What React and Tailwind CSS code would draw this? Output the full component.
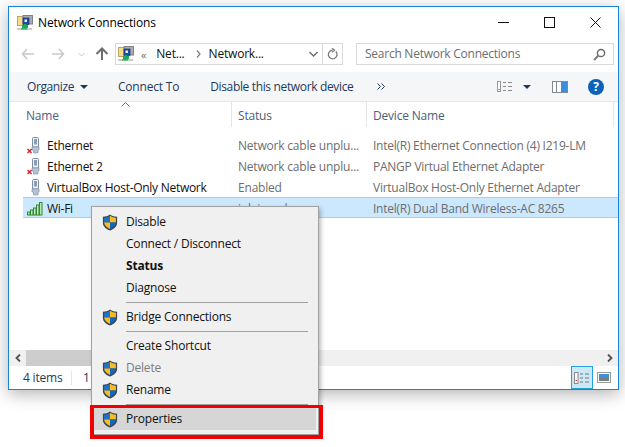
import React from "react";

const font = { fontFamily: '"Open Sans", "Noto Sans", sans-serif' };

function Shield({ className = "" }) {
  return (
    <svg width="16" height="17" viewBox="0 0 16 17" className={className}>
      <path d="M8 .4C6 1.900 3.500 2.600.9 2.700v6.300c0 3.600 3.200 6.100 7.100 7.600 3.900-1.500 7.100-4 7.100-7.600V2.700C12.500 2.600 10 1.900 8 .4z" fill="#3a4654" />
      <path d="M8 1.800C6.300 3 4.300 3.600 2.100 3.800v4.800H8z" fill="#1f74c9" />
      <path d="M8 1.800v6.800h5.900V3.800C11.700 3.600 9.700 3 8 1.800z" fill="#f6bd27" />
      <path d="M2.100 8.600c.2 2.900 2.800 5 5.900 6.400V8.600z" fill="#f6bd27" />
      <path d="M8 8.600V15c3.100-1.400 5.700-3.500 5.900-6.400z" fill="#1567bd" />
    </svg>
  );
}

function NetIcon() {
  return (
    <svg width="16" height="16" viewBox="0 0 16 16" className="shrink-0">
      <rect x="0.500" y="1.500" width="8" height="9" fill="#f3dc8c" stroke="#b9a565" />
      <rect x="6" y="0.500" width="9.500" height="8.500" fill="#a9adb3" stroke="#7c8087" />
      <rect x="6" y="3" width="6" height="6.500" fill="#1c4fa8" stroke="#1a2f66" strokeWidth="0.700" />
      <rect x="7.500" y="4.500" width="2.500" height="2.500" fill="#e8f0ff" />
      <rect x="5" y="10" width="6" height="3" fill="#1fa95a" />
      <rect x="7" y="9" width="2" height="2" fill="#1fa95a" />
      <rect x="0" y="13" width="15" height="2" fill="#c9c9c9" />
      <rect x="4" y="13" width="6" height="1.500" fill="#26b765" />
    </svg>
  );
}

function Plug({ x }) {
  return (
    <svg width="16" height="17" viewBox="0 0 16 17" className="shrink-0">
      <path d="M5.500 1.500q0-1 1-1h4q1 0 1 1v8.500h-6z" fill="#eef2f6" stroke="#7d8ca0" />
      <rect x="7" y="2" width="3" height="5.500" fill="#8b9db5" />
      <path d="M5 10h7v3H11v3H6.500v-3H5z" fill="#b4c3d6" stroke="#8796ab" strokeWidth="0.700" />
      {x && <path d="M0.500 12l4 4m0-4l-4 4" stroke="#d5232a" strokeWidth="1.500" />}
    </svg>
  );
}

function Bars() {
  return (
    <svg width="17" height="14" viewBox="0 0 17 14" className="shrink-0">
      {[
        [0.500, 10, 3],
        [3.500, 8, 5],
        [6.500, 6, 7],
        [9.500, 3, 10],
        [12.500, 0.500, 12.500],
      ].map(([x, y, h]) => (
        <rect key={x} x={x} y={y} width="2.500" height={h} fill="#bfe7b4" stroke="#2f8a35" strokeWidth="1" />
      ))}
    </svg>
  );
}

function Row({ icon, name, status, device, selected }) {
  return (
    <div
      className={
        "flex h-[21px] items-center border-y pt-[2px] " +
        (selected ? "border-[#99d1ff] bg-[#cce8ff]" : "border-transparent")
      }
    >
      <div className="flex w-[208px] shrink-0 items-center gap-[4px] pl-[4px] tracking-[-0.28px] text-[#111]">
        <span className="flex w-[16px] shrink-0 justify-center">{icon}</span>
        <span>{name}</span>
      </div>
      <div className="w-[135px] shrink-0 pl-[7px] text-[#6d6d6d]">{status}</div>
      <div className="pl-[7px] tracking-[-0.25px] text-[#6d6d6d]">{device}</div>
    </div>
  );
}

function MenuItem({ label, shield, bold, disabled, active }) {
  return (
    <div
      className={
        "flex h-[22px] items-center " +
        (active ? "bg-[#d6d6d6] " : "") +
        (disabled ? "text-[#7d7d7d] " : "text-[#111] ") +
        (bold ? "font-bold" : "")
      }
    >
      <span className="flex w-[32px] shrink-0 justify-end pr-[8px]">{shield && <Shield />}</span>
      <span>{label}</span>
    </div>
  );
}

function Sep() {
  return (
    <div className="flex h-[7px] items-center pl-[32px] pr-[8px]">
      <div className="h-px w-full bg-[#a0a0a0]" />
    </div>
  );
}

export default function App() {
  return (
    <div style={font} className="relative h-[447px] w-[625px] overflow-hidden bg-white pl-[8px] pt-[6px] text-[12px] leading-none tracking-[-0.2px]">
      <div className="flex h-[384px] w-[611px] flex-col border border-[#1883d7] bg-white shadow-[0_4px_16px_rgba(0,0,0,0.3)]">
        {/* Title bar */}
        <div className="flex h-[31px] shrink-0 items-center pl-[8px]">
          <NetIcon />
          <span className="ml-[5px] pt-[1px] text-[12px] tracking-[-0.14px] text-black">Network Connections</span>
          <div className="ml-auto flex items-center text-black">
            <span className="flex w-[46px] justify-center">
              <svg width="11" height="11" viewBox="0 0 11 11"><path d="M0 5.500h11" stroke="#111" /></svg>
            </span>
            <span className="flex w-[46px] justify-center">
              <svg width="11" height="11" viewBox="0 0 11 11"><rect x=".5" y=".5" width="10" height="10" fill="none" stroke="#111" /></svg>
            </span>
            <span className="flex w-[46px] justify-center">
              <svg width="11" height="11" viewBox="0 0 11 11"><path d="M.5.500l10 10m0-10l-10 10" stroke="#111" /></svg>
            </span>
          </div>
        </div>

        {/* Address row */}
        <div className="flex h-[34px] shrink-0 items-center pb-[2px]">
          <div className="flex w-[106px] shrink-0 items-center pl-[12px]">
            <svg width="14" height="12" viewBox="0 0 14 12"><path d="M6 1L1.500 6 6 11M1.500 6H13" fill="none" stroke="#c9c9c9" strokeWidth="1.600" /></svg>
            <svg width="14" height="12" viewBox="0 0 14 12" className="ml-[16px]"><path d="M8 1l4.500 5L8 11M12.500 6H1" fill="none" stroke="#c9c9c9" strokeWidth="1.600" /></svg>
            <svg width="7" height="5" viewBox="0 0 7 5" className="ml-[13px]"><path d="M.5 1l3 3 3-3" fill="none" stroke="#c9c9c9" /></svg>
            <svg width="14" height="14" viewBox="0 0 14 14" className="ml-[10px]"><path d="M1.500 7L7 1.500 12.500 7M7 1.500V13" fill="none" stroke="#6d6d6d" strokeWidth="2" /></svg>
          </div>
          <div className="flex h-[22px] w-[208px] shrink-0 items-center border border-[#d9d9d9] pl-[2px] text-[#111]">
            <NetIcon />
            <span className="ml-[7px] text-[11px] text-[#6d6d6d]">«</span>
            <span className="ml-[10px]">Net...</span>
            <svg width="5" height="8" viewBox="0 0 5 8" className="ml-[11px]"><path d="M1 .5L4 4 1 7.500" fill="none" stroke="#7a7a7a" strokeWidth="1.200" /></svg>
            <span className="ml-[8px]">Network...</span>
            <svg width="9" height="6" viewBox="0 0 9 6" className="ml-auto mr-[4px]"><path d="M.5 1l4 4 4-4" fill="none" stroke="#6d6d6d" strokeWidth="1.400" /></svg>
          </div>
          <div className="-ml-px flex h-[22px] w-[21px] shrink-0 items-center justify-center border border-[#d9d9d9]">
            <svg width="11" height="12" viewBox="0 0 11 12"><path d="M8.800 3.500A4.300 4.300 0 1 1 5.500 2.200M5 .3l2.500 2-2.500 2" fill="none" stroke="#7a7a7a" strokeWidth="1.300" /></svg>
          </div>
          <div className="ml-[13px] flex h-[22px] w-[258px] shrink-0 items-center border border-[#d9d9d9] pl-[8px] pr-[7px] tracking-[-0.25px] text-[#6d6d6d]">
            <span>Search Network Connections</span>
            <svg width="13" height="13" viewBox="0 0 13 13" className="ml-auto"><circle cx="8" cy="5" r="3.600" fill="none" stroke="#6d6d6d" strokeWidth="1.500" /><path d="M5.500 7.500L1 12" stroke="#7a7a7a" strokeWidth="2" /></svg>
          </div>
        </div>

        {/* Toolbar */}
        <div className="flex h-[30px] shrink-0 items-center border-b border-[#e6e6e6] bg-[#f5f6f7] text-[#1e395b]">
          <span className="ml-[18px] tracking-[-0.4px]">Organize</span>
          <svg width="8" height="4" viewBox="0 0 8 4" className="ml-[6px]"><path d="M0 0h8L4 4z" fill="#1e395b" /></svg>
          <span className="ml-[30px]">Connect To</span>
          <span className="ml-[31px] tracking-[-0.35px]">Disable this network device</span>
          <svg width="8" height="7" viewBox="0 0 8 7" className="ml-[24px]"><path d="M.5.500l3 3-3 3M4.500.500l3 3-3 3" fill="none" stroke="#1e395b" /></svg>
          <svg width="16" height="11" viewBox="0 0 16 11" className="ml-auto">
            <rect x=".5" y=".5" width="3" height="10" fill="#fff" stroke="#9a9a9a" />
            <rect x="1.500" y="8" width="1" height="1" fill="#d33" />
            <path d="M6 1.500h3m2 0h4M6 5.500h3m2 0h4M6 9.500h3m2 0h4" stroke="#8a8a8a" />
          </svg>
          <svg width="8" height="4" viewBox="0 0 8 4" className="ml-[10px]"><path d="M0 0h8L4 4z" fill="#1e395b" /></svg>
          <svg width="16" height="12" viewBox="0 0 16 12" className="ml-[21px]">
            <rect x=".5" y=".5" width="15" height="11" fill="#fff" stroke="#808a94" />
            <rect x="9" y="1" width="6" height="10" fill="#3d8fdc" />
            <path d="M4.500 1v10" stroke="#808a94" />
          </svg>
          <span className="ml-[20px] mr-[14px] flex h-[16px] w-[16px] items-center justify-center rounded-full bg-[#0b62b8] text-[12px] font-bold text-white">?</span>
        </div>

        {/* Column headers */}
        <div className="relative flex h-[25px] shrink-0 items-center text-[#4c607a]">
          <div className="flex h-full w-[222px] shrink-0 items-center pl-[17px] pt-[2px]">Name</div>
          <div className="flex h-full w-[135px] shrink-0 items-center border-l border-[#e5e5e5] pl-[6px] pt-[2px]">Status</div>
          <div className="flex h-full w-[248px] shrink-0 items-center border-x border-[#e5e5e5] pl-[6px] pt-[2px]">Device Name</div>
          <svg width="9" height="5" viewBox="0 0 9 5" className="absolute left-[112px] top-0"><path d="M.5 4.500l4-4 4 4" fill="none" stroke="#6d6d6d" /></svg>
        </div>

        {/* List */}
        <div className="min-h-0 flex-1 pl-[14px] pt-[7px]">
          <Row icon={<Plug x />} name="Ethernet" status="Network cable unplu..." device="Intel(R) Ethernet Connection (4) I219-LM" />
          <Row icon={<Plug x />} name="Ethernet 2" status="Network cable unplu..." device="PANGP Virtual Ethernet Adapter" />
          <Row icon={<Plug />} name="VirtualBox Host-Only Network" status="Enabled" device="VirtualBox Host-Only Ethernet Adapter" />
          <Row icon={<Bars />} name="Wi-Fi" status="inlaiened" device="Intel(R) Dual Band Wireless-AC 8265" selected />
        </div>

        {/* Scroll bar */}
        <div className="flex h-[16px] shrink-0 items-center bg-[#f0f0f0]">
          <span className="flex w-[17px] justify-center">
            <svg width="6" height="8" viewBox="0 0 6 8"><path d="M5 .5L1.500 4 5 7.500" fill="none" stroke="#505050" strokeWidth="1.800" /></svg>
          </span>
          <div className="h-full w-[280px] bg-[#cdcdcd]" />
          <span className="ml-auto flex w-[17px] justify-center">
            <svg width="6" height="8" viewBox="0 0 6 8"><path d="M1 .5L4.500 4 1 7.500" fill="none" stroke="#505050" strokeWidth="1.800" /></svg>
          </span>
        </div>

        {/* Status bar */}
        <div className="flex h-[23px] shrink-0 items-center text-[#1e395b]">
          <span className="ml-[14px] w-[48px]">4 items</span>
          <span className="h-[14px] w-px bg-[#e5e5e5]" />
          <span className="ml-[11px]">1</span>
          <div className="ml-auto mr-[3px] flex h-full items-center">
            <span className="flex h-[23px] w-[22px] items-center justify-center border border-[#26a0da] bg-[#cbe8f6]">
              <svg width="16" height="12" viewBox="0 0 16 12">
                <rect x=".5" y=".5" width="3.500" height="11" fill="#fff" stroke="#8a8a8a" />
                <rect x="1.500" y="8" width="1.500" height="1" fill="#d33" />
                <path d="M6 2h3m2 0h4M6 6h3m2 0h4M6 10h3m2 0h4" stroke="#777" />
              </svg>
            </span>
            <span className="flex h-[23px] w-[22px] items-center justify-center">
              <svg width="14" height="11" viewBox="0 0 14 11">
                <rect x=".5" y=".5" width="13" height="10" fill="#fff" stroke="#9a9a9a" />
                <rect x="2" y="2" width="10" height="3" fill="#3f8fdc" />
                <rect x="2" y="5" width="10" height="4" fill="#6f8578" />
              </svg>
            </span>
          </div>
        </div>
      </div>

      {/* Context menu */}
      <div className="absolute left-[91px] top-[206px] h-[229px] w-[228px] border border-[#a0a0a0] bg-[#f0f0f0] px-[2px] pt-[4px] shadow-[2px_2px_4px_rgba(0,0,0,0.25)]">
        <MenuItem label="Disable" shield />
        <MenuItem label="Connect / Disconnect" />
        <MenuItem label="Status" bold />
        <MenuItem label="Diagnose" />
        <Sep />
        <MenuItem label="Bridge Connections" shield />
        <Sep />
        <MenuItem label="Create Shortcut" />
        <MenuItem label="Delete" shield disabled />
        <MenuItem label="Rename" shield />
        <Sep />
        <MenuItem label="Properties" shield active />
      </div>

      {/* Red highlight */}
      <div className="absolute left-[90px] top-[405px] h-[34px] w-[233px] border-[4px] border-t-[3px] border-[#f00000]" />
    </div>
  );
}
